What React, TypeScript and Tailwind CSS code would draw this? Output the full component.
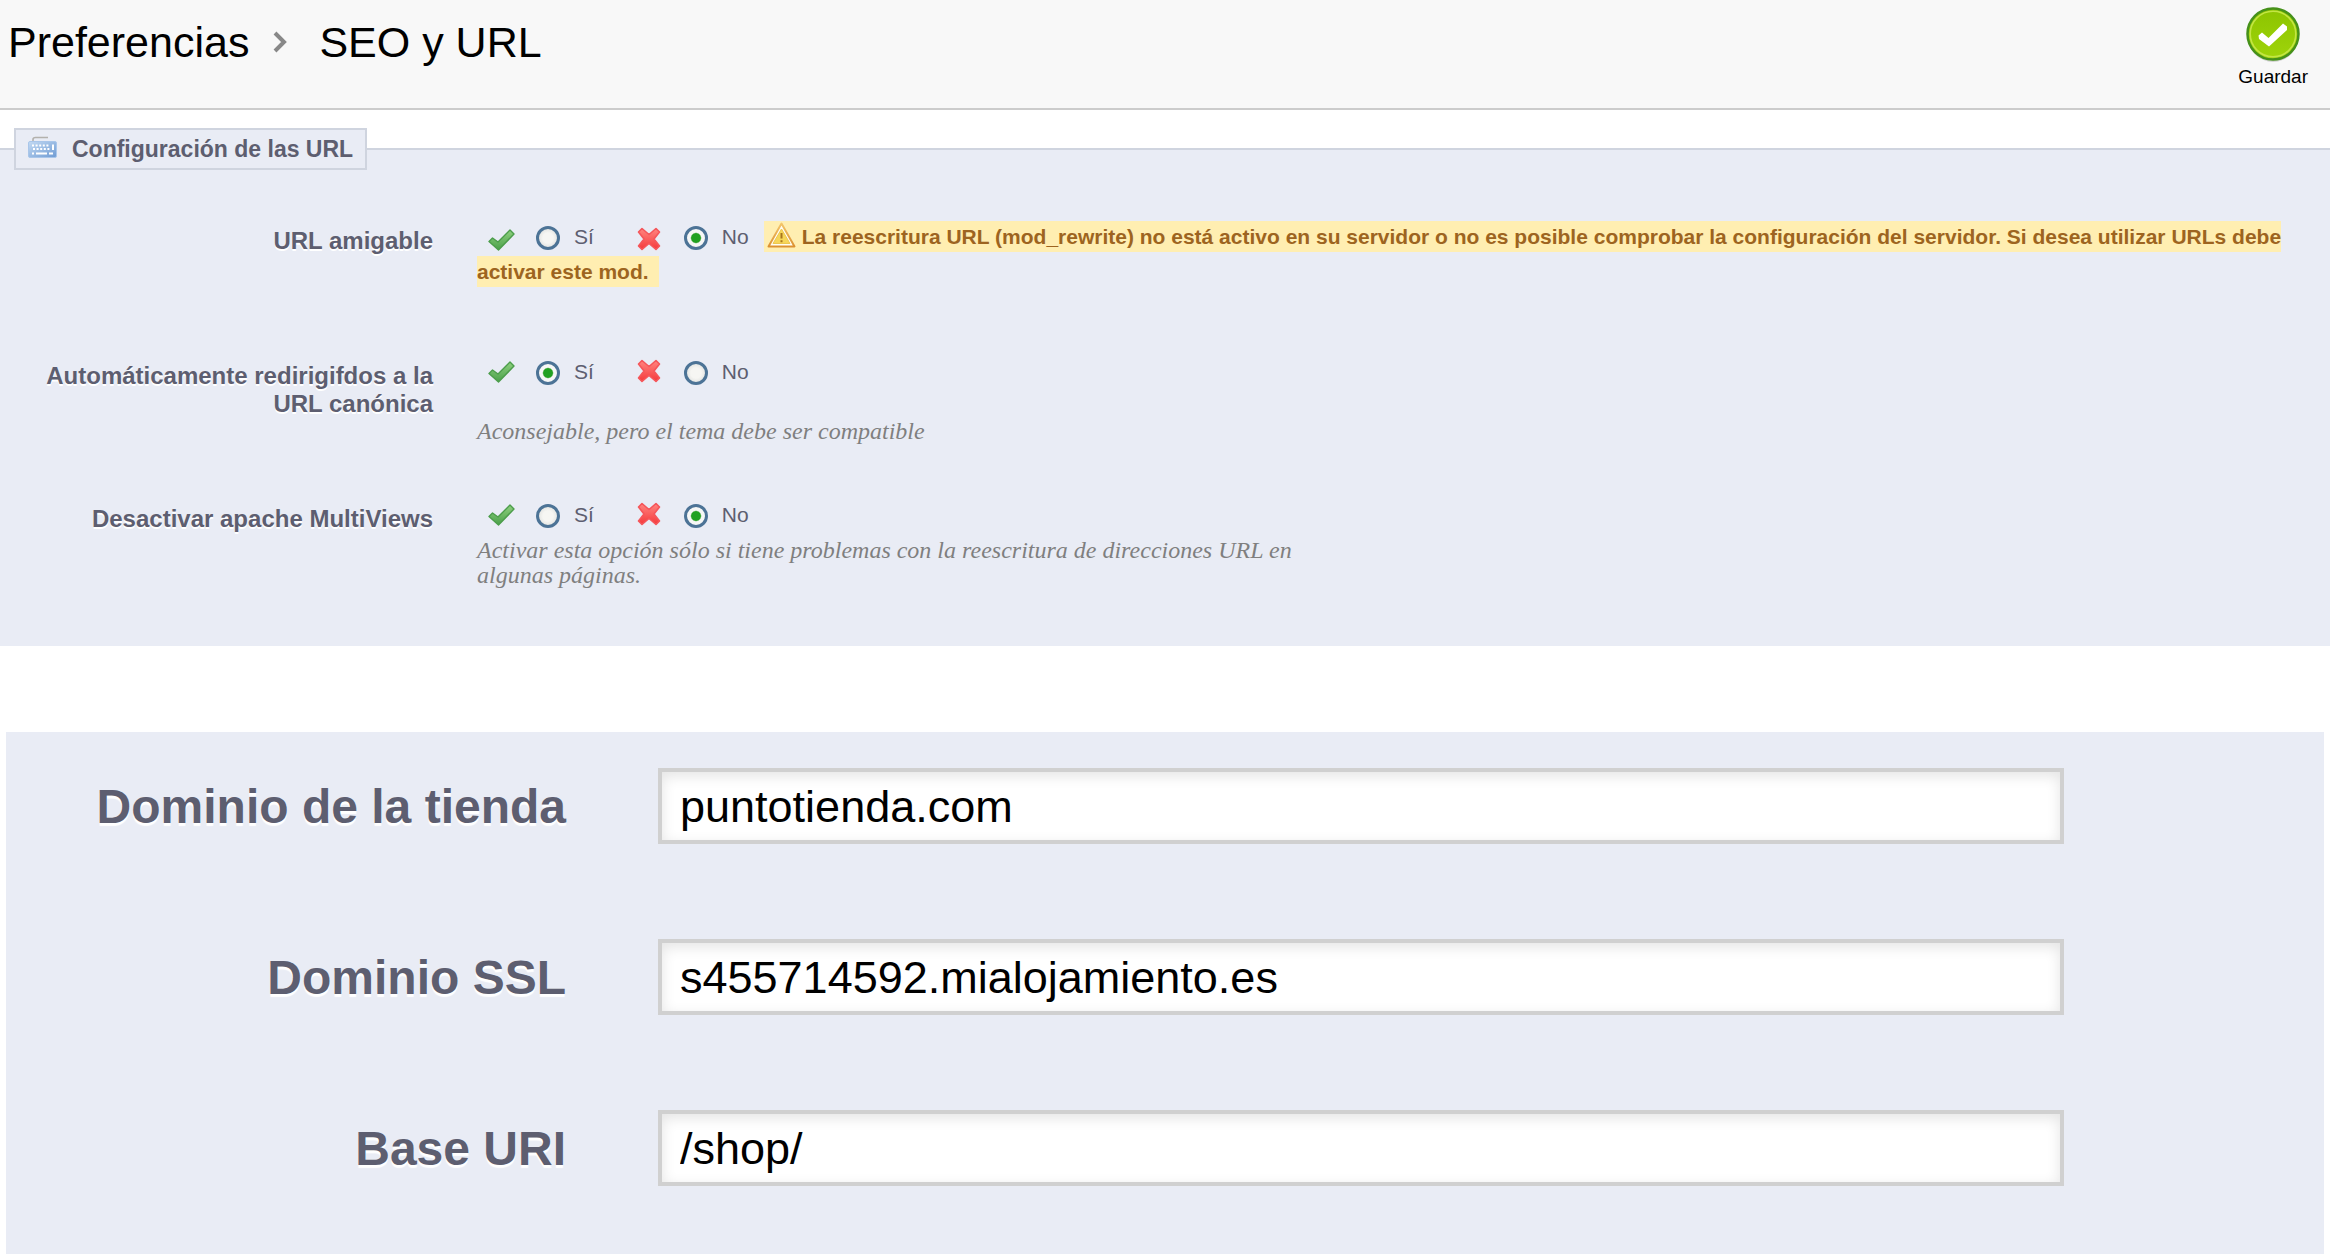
import { useState } from "react";

type Answer = "yes" | "no";

const RADIO =
    "appearance-none inline-block h-6 w-6 rounded-full border-[3px] border-[#4c7396] bg-radial from-[#f6f6f3] from-40% to-[#d6d8d6] align-middle checked:bg-radial checked:from-[#21a121] checked:from-35% checked:to-[#f6f7f6] checked:to-45%";

function CheckIcon({ className }: { className: string }) {
    return (
        <svg viewBox="0 0 27 22" className={`inline-block h-[22px] w-[27px] ${className}`} aria-hidden="true">
            <defs>
                <linearGradient id="tick" x1="0" y1="0" x2="0" y2="1">
                    <stop offset="0" stopColor="#8fd07f" />
                    <stop offset="1" stopColor="#4aa04a" />
                </linearGradient>
            </defs>
            <path d="M1 12.5 4.5 9 10 13 22 1 26 5 10.5 21Z" fill="url(#tick)" stroke="#4c9d4b" strokeWidth="1.4" strokeLinejoin="round" />
        </svg>
    );
}

function CrossIcon({ className }: { className: string }) {
    return (
        <svg viewBox="0 0 24 24" className={`inline-block h-6 w-6 ${className}`} aria-hidden="true">
            <defs>
                <linearGradient id="cross" x1="0" y1="0" x2="0" y2="1">
                    <stop offset="0" stopColor="#ff8580" />
                    <stop offset="1" stopColor="#f5393b" />
                </linearGradient>
            </defs>
            <path
                d="M5 1.5 12 7.5 19 1.5 22.5 5 17 12 22.5 19 19 22.5 12 16.5 5 22.5 1.5 19 7 12 1.5 5Z"
                fill="url(#cross)"
                stroke="#f5565a"
                strokeWidth="1.6"
                strokeLinejoin="round"
            />
        </svg>
    );
}

function WarningIcon() {
    return (
        <svg viewBox="0 0 29 26" className="mr-[6px] ml-[3px] inline-block h-[26px] w-[29px] align-text-bottom" aria-hidden="true">
            <defs>
                <linearGradient id="warn" x1="0" y1="0" x2="0" y2="1">
                    <stop offset="0" stopColor="#f3c56b" />
                    <stop offset="1" stopColor="#dc9132" />
                </linearGradient>
            </defs>
            <path d="M14.5 1.5 27.5 24.5H1.5Z" fill="#fffdf3" stroke="url(#warn)" strokeWidth="2" strokeLinejoin="round" />
            <path d="M14.5 7 23 21.5H6Z" fill="#f6d659" stroke="#eec64f" />
            <path d="M14.5 11v5.5M14.5 18.2v2" stroke="#a8761e" strokeWidth="2" />
        </svg>
    );
}

function KeyboardIcon() {
    return (
        <svg viewBox="0 0 29 22" className="mb-1 h-[22px] w-[29px]" aria-hidden="true">
            <defs>
                <linearGradient id="keys" x1="0" y1="0" x2="1" y2="1">
                    <stop offset="0" stopColor="#c3daf3" />
                    <stop offset="1" stopColor="#6f9bd3" />
                </linearGradient>
            </defs>
            <path d="M5 6V3.500Q5 1.500 7.500 1.500H20" fill="none" stroke="#b3b1ad" strokeWidth="1.6" />
            <rect x="0.500" y="5.500" width="28" height="16" rx="1.500" fill="url(#keys)" stroke="#a9c6ea" />
            <path d="M4 9.500H22M5 13H22" stroke="#fff" strokeWidth="2" strokeDasharray="2 1.600" />
            <path d="M25 8.500V14M4 17.500H6M8 17.500H19M21 17.500H25" stroke="#fff" strokeWidth="2" />
        </svg>
    );
}

function SaveIcon() {
    return (
        <svg viewBox="0 0 54 56" className="h-14 w-[54px]" aria-hidden="true">
            <defs>
                <linearGradient id="save" x1="0" y1="0" x2="0" y2="1">
                    <stop offset="0" stopColor="#8cc400" />
                    <stop offset="1" stopColor="#9fd40a" />
                </linearGradient>
            </defs>
            <ellipse cx="27" cy="30" rx="25" ry="25" fill="#000" opacity="0.15" />
            <circle cx="27" cy="27" r="25.500" fill="url(#save)" stroke="#46911a" strokeWidth="2.500" />
            <circle cx="27" cy="27" r="22.800" fill="none" stroke="#c3e544" strokeWidth="1.600" />
            <path d="M12.500 28.500 16 25.500 22.500 31 37 16.500 41 19.500V23L23 39.500 13 32Z" fill="#fff" />
        </svg>
    );
}

function YesNo({ name, legend, initial, iconAlign }: { name: string; legend: string; initial: Answer; iconAlign: string }) {
    const [value, setValue] = useState<Answer>(initial);

    return (
        <span role="radiogroup" aria-label={legend} className="pl-[11px]">
            <CheckIcon className={iconAlign} />
            <input id={`${name}_on`} type="radio" name={name} checked={value === "yes"} onChange={() => setValue("yes")} className={`${RADIO} ml-[21px]`} />
            <label htmlFor={`${name}_on`} className="ml-[14px]">Sí</label>
            <CrossIcon className={`ml-[43px] ${iconAlign}`} />
            <input id={`${name}_off`} type="radio" name={name} checked={value === "no"} onChange={() => setValue("no")} className={`${RADIO} ml-[23px]`} />
            <label htmlFor={`${name}_off`} className="ml-[14px]">No</label>
        </span>
    );
}

function OptionRow({ label, children }: { label: string; children: React.ReactNode }) {
    return (
        <div className="flex gap-11">
            <div className="w-[433px] shrink-0 pt-2 pl-10 text-right text-2xl leading-7 font-bold text-[#5d5e70] [text-shadow:0_2px_0_#fff]">
                {label}
            </div>
            <div className="min-w-0 flex-1 text-[21px] leading-[35px] text-[#5d5e70]">{children}</div>
        </div>
    );
}

const DOMAIN_FIELDS = [
    { id: "domain", label: "Dominio de la tienda", value: "puntotienda.com" },
    { id: "domain_ssl", label: "Dominio SSL", value: "s455714592.mialojamiento.es" },
    { id: "uri", label: "Base URI", value: "/shop/" },
];

const HINT = "max-w-[840px] font-['Liberation_Serif',serif] text-2xl leading-[25px] text-[#7f7f7f] italic";

export default function App() {
    return (
        <div className="flex min-h-screen flex-col bg-white font-['Liberation_Sans',Arial,sans-serif]">
            <header className="flex items-start justify-between border-b-2 border-[#ccc] bg-[#f8f8f8] pr-[22px] pl-2">
                <h1 className="flex items-center pt-[17px] text-[43px] leading-[50px] text-black">
                    Preferencias
                    <svg viewBox="0 0 14 22" className="mr-8 ml-6 h-[22px] w-[14px]" aria-hidden="true">
                        <path d="M2 2 11 11 2 20" fill="none" stroke="#888" strokeWidth="4" />
                    </svg>
                    SEO y URL
                </h1>
                <button type="button" className="flex h-[108px] flex-col items-center pt-[7px] text-[19px] leading-[22px] text-black">
                    <SaveIcon />
                    <span className="mt-[3px]">Guardar</span>
                </button>
            </header>

            <fieldset className="mt-[18px] border-t-2 border-[#cfd4df] bg-[#e9ecf5] pr-10 pb-[58px]">
                <legend className="ml-[14px] flex h-[42px] items-center gap-[15px] border-2 border-[#cfd4df] bg-[#e9ecf5] px-3 text-[23px] font-bold text-[#5d5e70]">
                    <KeyboardIcon />
                    Configuración de las URL
                </legend>

                <div className="pt-[49px]">
                    <OptionRow label="URL amigable">
                        <YesNo name="rewrite" legend="URL amigable" initial="no" iconAlign="align-[-7px]" />
                        <span className="ml-[15px] bg-[#ffeeb1] py-1 pr-[10px] font-bold text-[#9d6420]">
                            <WarningIcon />
                            La reescritura URL (mod_rewrite) no está activo en su servidor o no es posible comprobar la configuración del servidor. Si desea utilizar URLs debe activar este mod.
                        </span>
                    </OptionRow>
                </div>
                <div className="pt-[65px]">
                    <OptionRow label="Automáticamente redirigifdos a la URL canónica">
                        <YesNo name="canonical" legend="Automáticamente redirigifdos a la URL canónica" initial="yes" iconAlign="align-text-bottom" />
                        <p className={`${HINT} mt-[30px]`}>Aconsejable, pero el tema debe ser compatible</p>
                    </OptionRow>
                </div>
                <div className="pt-[53px]">
                    <OptionRow label="Desactivar apache MultiViews">
                        <YesNo name="multiviews" legend="Desactivar apache MultiViews" initial="no" iconAlign="align-text-bottom" />
                        <p className={`${HINT} mt-[6px]`}>
                            Activar esta opción sólo si tiene problemas con la reescritura de direcciones URL en algunas páginas.
                        </p>
                    </OptionRow>
                </div>
            </fieldset>

            <form className="mx-[6px] mt-[86px] flex grow flex-col gap-[95px] bg-[#e9ecf5] pt-9 pr-[260px]">
                {DOMAIN_FIELDS.map((field) => (
                    <div key={field.id} className="flex items-center gap-[92px]">
                        <label htmlFor={field.id} className="w-[560px] shrink-0 pt-[2px] text-right text-5xl font-bold text-[#5d5e70] [text-shadow:0_3px_1px_#fff]">
                            {field.label}
                        </label>
                        <input
                            id={field.id}
                            type="text"
                            defaultValue={field.value}
                            className="h-[76px] min-w-0 flex-1 border-4 border-[#d0d0d0] bg-white px-[18px] pt-[2px] text-[45px] text-black shadow-[inset_0_4px_14px_#e4e4e4]"
                        />
                    </div>
                ))}
            </form>
        </div>
    );
}
